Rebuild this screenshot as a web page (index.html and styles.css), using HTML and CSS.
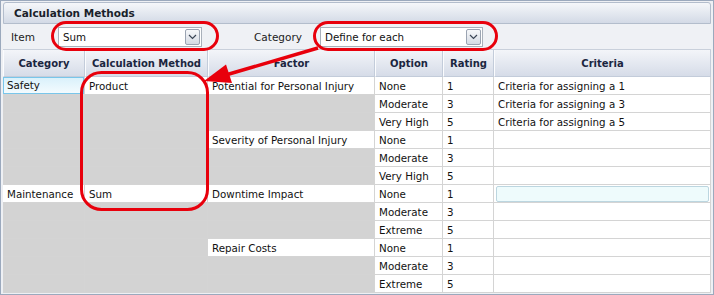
FILE: index.html
```html
<!DOCTYPE html>
<html>
<head>
<meta charset="UTF-8">
<title>Calculation Methods</title>
<link rel="stylesheet" href="styles.css">
</head>
<body>
<div class="panel">
	<div class="title">Calculation Methods</div>
	<div class="toolbar">
		<span class="lbl lbl-item">Item</span>
		<div class="select sel-item">
			<span>Sum</span>
			<span class="drop"><svg width="9" height="6" viewBox="0 0 9 6"><path d="M1 1 L4.5 4.5 L8 1" fill="none" stroke="#3b4656" stroke-width="1.2"/></svg></span>
		</div>
		<span class="lbl lbl-cat">Category</span>
		<div class="select sel-cat">
			<span>Define for each</span>
			<span class="drop"><svg width="9" height="6" viewBox="0 0 9 6"><path d="M1 1 L4.5 4.5 L8 1" fill="none" stroke="#3b4656" stroke-width="1.2"/></svg></span>
		</div>
	</div>
	<table class="grid">
		<thead>
			<tr>
				<th class="c1">Category</th>
				<th class="c2">Calculation Method</th>
				<th class="c3">Factor</th>
				<th class="c4">Option</th>
				<th class="c5">Rating</th>
				<th class="c6">Criteria</th>
			</tr>
		</thead>
		<tbody>
			<tr><td class="sel"><div class="selbox">Safety</div></td><td>Product</td><td>Potential for Personal Injury</td><td>None</td><td>1</td><td>Criteria for assigning a 1</td></tr>
			<tr><td class="g"></td><td class="g"></td><td class="g"></td><td>Moderate</td><td>3</td><td>Criteria for assigning a 3</td></tr>
			<tr><td class="g"></td><td class="g"></td><td class="g"></td><td>Very High</td><td>5</td><td>Criteria for assigning a 5</td></tr>
			<tr><td class="g"></td><td class="g"></td><td>Severity of Personal Injury</td><td>None</td><td>1</td><td></td></tr>
			<tr><td class="g"></td><td class="g"></td><td class="g"></td><td>Moderate</td><td>3</td><td></td></tr>
			<tr><td class="g"></td><td class="g"></td><td class="g"></td><td>Very High</td><td>5</td><td></td></tr>
			<tr><td>Maintenance</td><td>Sum</td><td>Downtime Impact</td><td>None</td><td>1</td><td class="edit"><div class="editbox"></div></td></tr>
			<tr><td class="g"></td><td class="g"></td><td class="g"></td><td>Moderate</td><td>3</td><td></td></tr>
			<tr><td class="g"></td><td class="g"></td><td class="g"></td><td>Extreme</td><td>5</td><td></td></tr>
			<tr><td class="g"></td><td class="g"></td><td>Repair Costs</td><td>None</td><td>1</td><td></td></tr>
			<tr><td class="g"></td><td class="g"></td><td class="g"></td><td>Moderate</td><td>3</td><td></td></tr>
			<tr><td class="g"></td><td class="g"></td><td class="g"></td><td>Extreme</td><td>5</td><td></td></tr>
		</tbody>
	</table>
	<svg class="marks" width="714" height="295" viewBox="0 0 714 295">
		<rect x="52.5" y="22.5" width="165" height="27" rx="13.5" fill="none" stroke="#e8000c" stroke-width="3"/>
		<rect x="314.5" y="22.5" width="182" height="27" rx="13.5" fill="none" stroke="#e8000c" stroke-width="3"/>
		<rect x="81.5" y="72.5" width="126" height="137" rx="20" fill="none" stroke="#e8000c" stroke-width="3"/>
		<line x1="318" y1="48" x2="224" y2="75.5" stroke="#e8000c" stroke-width="3.5"/>
		<polygon points="204,81 226,64.5 232,83" fill="#e8000c"/>
	</svg>
</div>
</body>
</html>
```

FILE: styles.css
```css
body{
	margin : 0;
	font-family : "DejaVu Sans", sans-serif;
	font-size : 10.3px;
	color : #111;
}

.panel{
	position : relative;
	width : 714px;
	height : 295px;
	box-sizing : border-box;
	border : 1px solid #9ba9bd;
	padding : 1px 2px 0 2px;
	background-color : #eef0f4;
}

.title{
	height : 20px;
	line-height : 20px;
	padding-left : 10px;
	font-weight : bold;
	font-size : 10.5px;
	color : #1a1f2b;
	border : 1px solid #b3bdcc;
	border-radius : 3px 3px 0 0;
	background : linear-gradient(#f5f7fa, #d3dae6);
}

.toolbar{
	display : flex;
	align-items : center;
	height : 25px;
	background-color : #eff1f5;
	border-bottom : 1px solid #c9d0db;
}

.lbl{
	font-size : 10.5px;
	color : #1c1c1c;
}

.lbl-item{
	margin-left : 8px;
	width : 47px;
}

.lbl-cat{
	margin-left : 52px;
	width : 66px;
}

.select{
	display : flex;
	align-items : center;
	justify-content : space-between;
	box-sizing : border-box;
	height : 20px;
	padding : 0 1px 0 4px;
	background-color : #fff;
	border : 1px solid #a9b0ba;
}

.sel-item{
	width : 144px;
}

.sel-cat{
	width : 163px;
}

.drop{
	display : flex;
	align-items : center;
	justify-content : center;
	box-sizing : border-box;
	width : 15px;
	height : 16px;
	border : 1px solid #9ba4b2;
	border-radius : 2px;
	background : linear-gradient(#f7f8fa, #d5dbe4);
}

.grid{
	table-layout : fixed;
	width : 708px;
	border-collapse : separate;
	border-spacing : 0;
	background-color : #fff;
}

.grid th{
	box-sizing : border-box;
	height : 27px;
	font-size : 10px;
	font-weight : bold;
	color : #1b2640;
	text-align : center;
	border-left : 1px solid #fbfcfe;
	border-right : 1px solid #c3ccda;
	border-bottom : 1px solid #c3ccda;
	background : linear-gradient(#f3f5f9, #d6dce8);
}

.c1{ width : 82px; }
.c2{ width : 123px; }
.c3{ width : 167px; }
.c4{ width : 68px; }
.c5{ width : 51px; }
.c6{ width : 217px; }

.grid td{
	box-sizing : border-box;
	height : 18px;
	padding : 0 0 0 4px;
	white-space : nowrap;
	overflow : hidden;
	border-right : 1px solid #d4d4d4;
	border-bottom : 1px solid #d4d4d4;
}

.grid td.g{
	background-color : #d3d3d3;
}

.grid td.sel{
	padding : 0;
}

.selbox{
	height : 15px;
	line-height : 15px;
	padding-left : 3px;
	border : 1px solid #79c6ea;
	background : linear-gradient(#daf1fb, #f3fbfe);
}

.grid td.edit{
	padding : 1px 1px 0 2px;
}

.editbox{
	height : 14px;
	border : 1px solid #bcd6e0;
	border-radius : 2px;
	background-color : #eefbfc;
}

.marks{
	position : absolute;
	left : -1px;
	top : -1px;
	pointer-events : none;
}
```
